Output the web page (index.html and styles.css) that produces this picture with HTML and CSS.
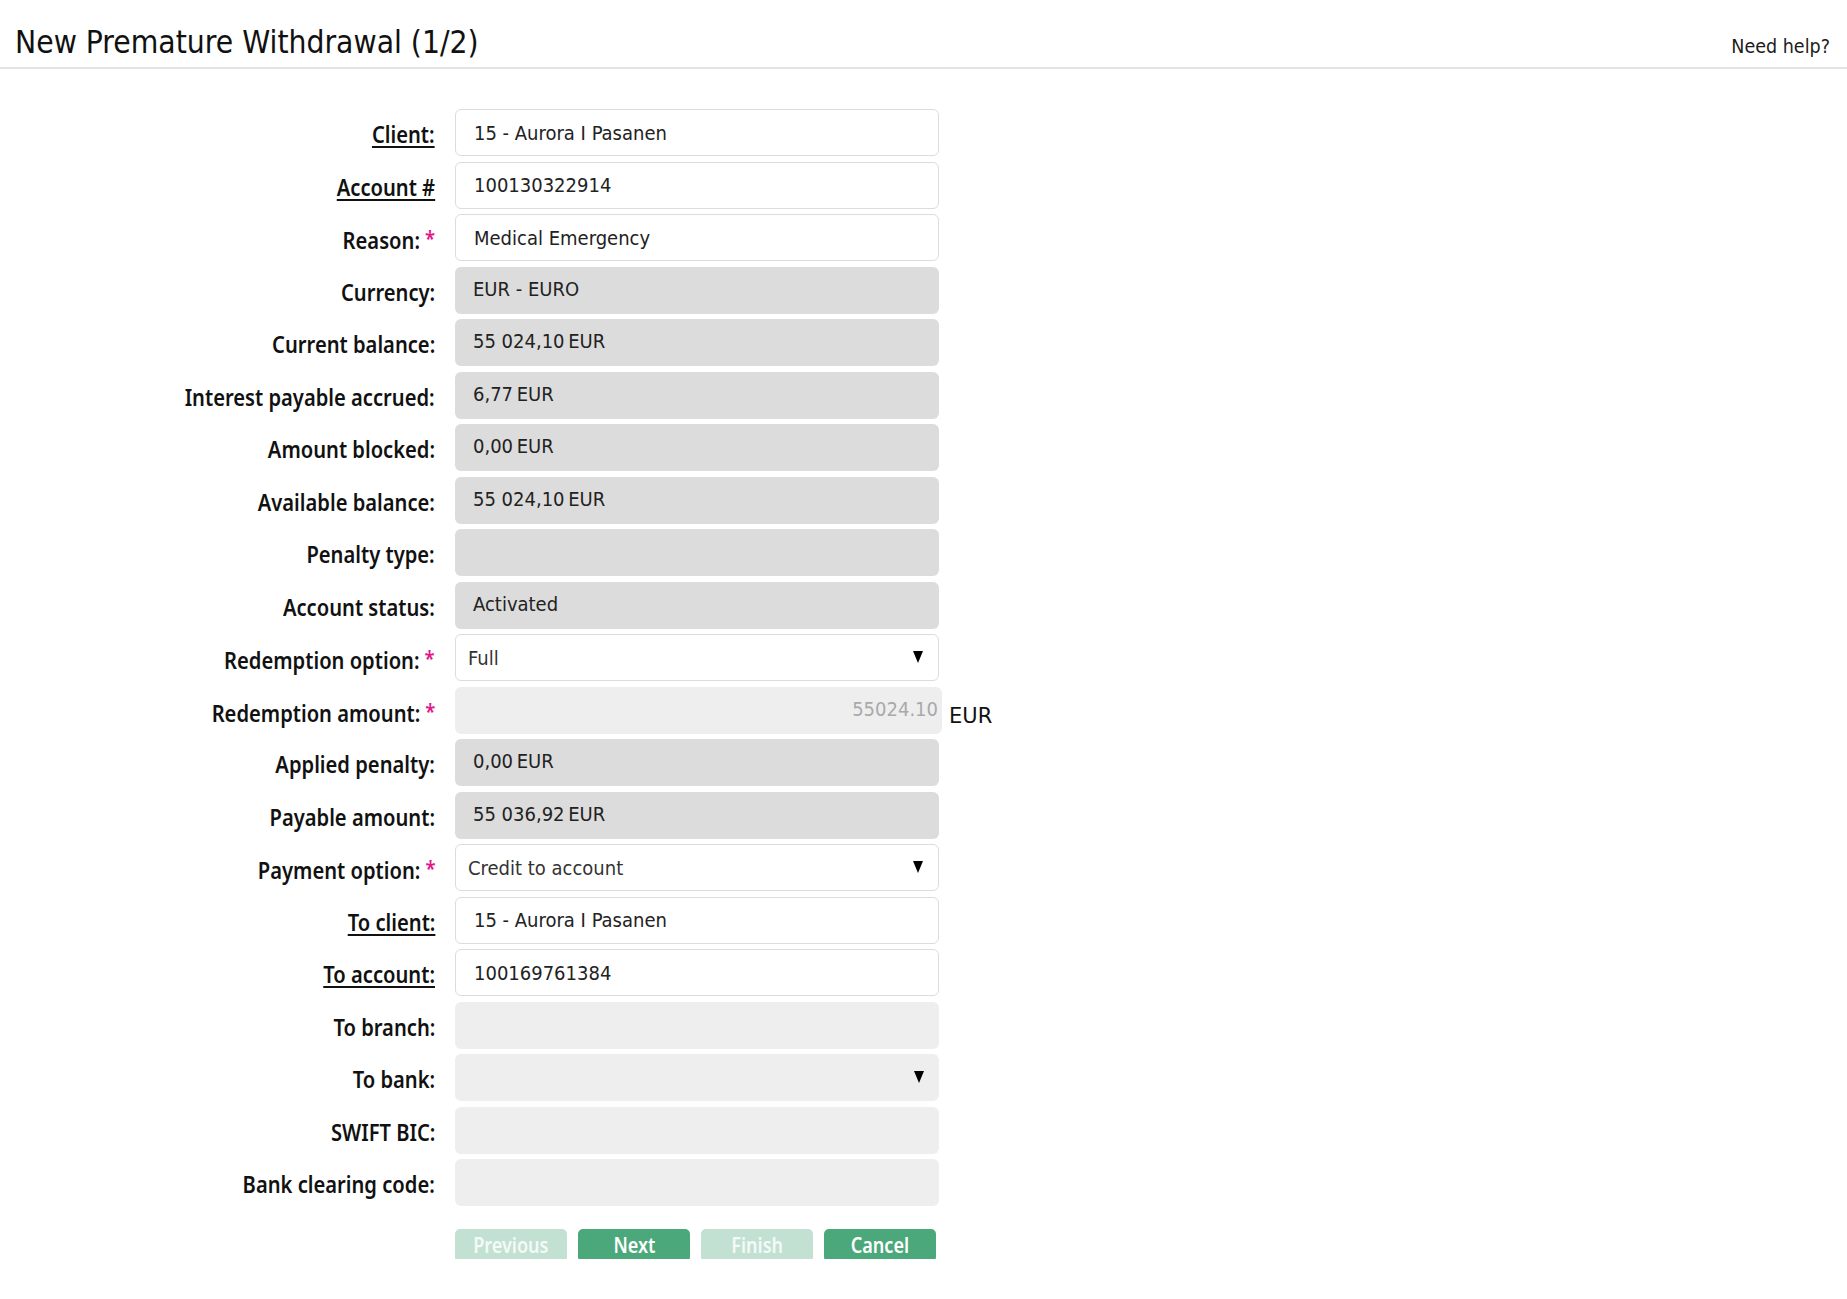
FILE: index.html
```html
<!DOCTYPE html>
<html lang="en">
<head>
<meta charset="utf-8">
<title>New Premature Withdrawal (1/2)</title>
<link rel="stylesheet" href="styles.css">
</head>
<body>
<header class="topbar">
  <h1 class="title">New Premature Withdrawal (1/2)</h1>
  <a class="help" href="#">Need help?</a>
</header>

<main class="form">
  <div class="label"><span class="lt"><a class="link" href="#">Client:</a></span></div>
  <div class="field input">15 - Aurora I Pasanen</div>

  <div class="label"><span class="lt"><a class="link" href="#">Account #</a></span></div>
  <div class="field input">100130322914</div>

  <div class="label"><span class="lt">Reason:<span class="req">*</span></span></div>
  <div class="field input">Medical Emergency</div>

  <div class="label"><span class="lt">Currency:</span></div>
  <div class="field readonly">EUR - EURO</div>

  <div class="label"><span class="lt">Current balance:</span></div>
  <div class="field readonly">55 024,10&#8201;EUR</div>

  <div class="label"><span class="lt">Interest payable accrued:</span></div>
  <div class="field readonly">6,77&#8201;EUR</div>

  <div class="label"><span class="lt">Amount blocked:</span></div>
  <div class="field readonly">0,00&#8201;EUR</div>

  <div class="label"><span class="lt">Available balance:</span></div>
  <div class="field readonly">55 024,10&#8201;EUR</div>

  <div class="label"><span class="lt">Penalty type:</span></div>
  <div class="field readonly"></div>

  <div class="label"><span class="lt">Account status:</span></div>
  <div class="field readonly">Activated</div>

  <div class="label"><span class="lt">Redemption option:<span class="req">*</span></span></div>
  <div class="field select">Full<span class="arrow"></span></div>

  <div class="label"><span class="lt">Redemption amount:<span class="req">*</span></span></div>
  <div class="amount-wrap">
    <div class="field amount">55024.10</div>
    <span class="unit">EUR</span>
  </div>

  <div class="label"><span class="lt">Applied penalty:</span></div>
  <div class="field readonly">0,00&#8201;EUR</div>

  <div class="label"><span class="lt">Payable amount:</span></div>
  <div class="field readonly">55 036,92&#8201;EUR</div>

  <div class="label"><span class="lt">Payment option:<span class="req">*</span></span></div>
  <div class="field select">Credit to account<span class="arrow"></span></div>

  <div class="label"><span class="lt"><a class="link" href="#">To client:</a></span></div>
  <div class="field input">15 - Aurora I Pasanen</div>

  <div class="label"><span class="lt"><a class="link" href="#">To account:</a></span></div>
  <div class="field input">100169761384</div>

  <div class="label"><span class="lt">To branch:</span></div>
  <div class="field light"></div>

  <div class="label"><span class="lt">To bank:</span></div>
  <div class="field light"><span class="arrow"></span></div>

  <div class="label"><span class="lt">SWIFT BIC:</span></div>
  <div class="field light"></div>

  <div class="label"><span class="lt">Bank clearing code:</span></div>
  <div class="field light"></div>

  <div class="buttons">
    <button class="btn disabled"><span class="bt">Previous</span></button>
    <button class="btn"><span class="bt">Next</span></button>
    <button class="btn disabled"><span class="bt">Finish</span></button>
    <button class="btn"><span class="bt">Cancel</span></button>
  </div>
</main>
</body>
</html>
```

FILE: styles.css
```css
html, body {
  margin: 0;
  padding: 0;
  background: #ffffff;
}

body {
  font-family: "DejaVu Sans Condensed", "DejaVu Sans", sans-serif;
  color: #1a1a1a;
}

.topbar {
  height: 69px;
  box-sizing: border-box;
  padding: 24px 17px 0 15px;
  border-bottom: 2px solid #e4e4e4;
  display: flex;
  justify-content: space-between;
  align-items: baseline;
}

.title {
  margin: 0;
  font-family: "DejaVu Sans Condensed", "DejaVu Sans", sans-serif;
  font-weight: normal;
  font-size: 31.5px;
  line-height: 36px;
  color: #111111;
}

.help {
  font-family: "DejaVu Sans Condensed", "DejaVu Sans", sans-serif;
  font-size: 19.5px;
  color: #1c1c1c;
  text-decoration: none;
}

.form {
  display: grid;
  grid-template-columns: 435px 484px;
  grid-auto-rows: 47px;
  column-gap: 20px;
  row-gap: 5.5px;
  padding-top: 40px;
}

.label {
  display: flex;
  justify-content: flex-end;
  align-items: center;
  padding-top: 3px;
  font-family: "Noto Sans", sans-serif;
  font-weight: 600;
  font-size: 24px;
  line-height: 1;
  color: #111111;
  white-space: nowrap;
}

.lt {
  display: inline-block;
  transform: scaleX(0.84);
  transform-origin: right center;
}

.link {
  color: #111111;
  text-decoration: underline;
  text-underline-offset: 3px;
  text-decoration-thickness: 2px;
}

.req {
  color: #e2168a;
  margin-left: 6px;
  font-size: 22px;
  vertical-align: 3px;
}

.field {
  position: relative;
  box-sizing: border-box;
  height: 47px;
  border-radius: 6px;
  display: flex;
  align-items: center;
  padding: 0 18px;
  font-family: "DejaVu Sans Condensed", "DejaVu Sans", sans-serif;
  font-size: 20px;
  color: #222222;
  white-space: nowrap;
}

.input {
  background: #ffffff;
  border: 1px solid #dcdcdc;
}

.readonly {
  background: #dcdcdc;
  padding-bottom: 3px;
}

.light {
  background: #eeeeee;
}

.select {
  background: #ffffff;
  border: 1px solid #dcdcdc;
  padding-left: 12px;
  color: #333333;
}

.arrow {
  position: absolute;
  right: 15px;
  top: 50%;
  margin-top: -7px;
  width: 0;
  height: 0;
  border-left: 5.5px solid transparent;
  border-right: 5.5px solid transparent;
  border-top: 12px solid #000000;
}

.amount-wrap {
  display: flex;
  align-items: center;
  width: 540px;
}

.amount {
  width: 487px;
  flex: none;
  background: #eeeeee;
  justify-content: flex-end;
  padding: 0 4px 3px 0;
  color: #a9a9a9;
}

.unit {
  margin-left: 7px;
  margin-top: 12px;
  font-family: "DejaVu Sans", sans-serif;
  font-size: 21px;
  color: #111111;
}

.buttons {
  grid-column: 2;
  display: flex;
  gap: 11px;
  margin-top: 17px;
  height: 33px;
}

.btn {
  width: 112px;
  height: 33px;
  border: none;
  border-radius: 5px;
  background: #4ba87a;
  color: #ffffff;
  font-family: "Noto Sans", sans-serif;
  font-weight: 600;
  font-size: 21px;
  line-height: 1;
  padding: 0;
  cursor: pointer;
}

.bt {
  display: inline-block;
  transform: scaleX(0.86);
}

.btn.disabled {
  background: #c3e1d2;
  color: #f4faf7;
}
```
